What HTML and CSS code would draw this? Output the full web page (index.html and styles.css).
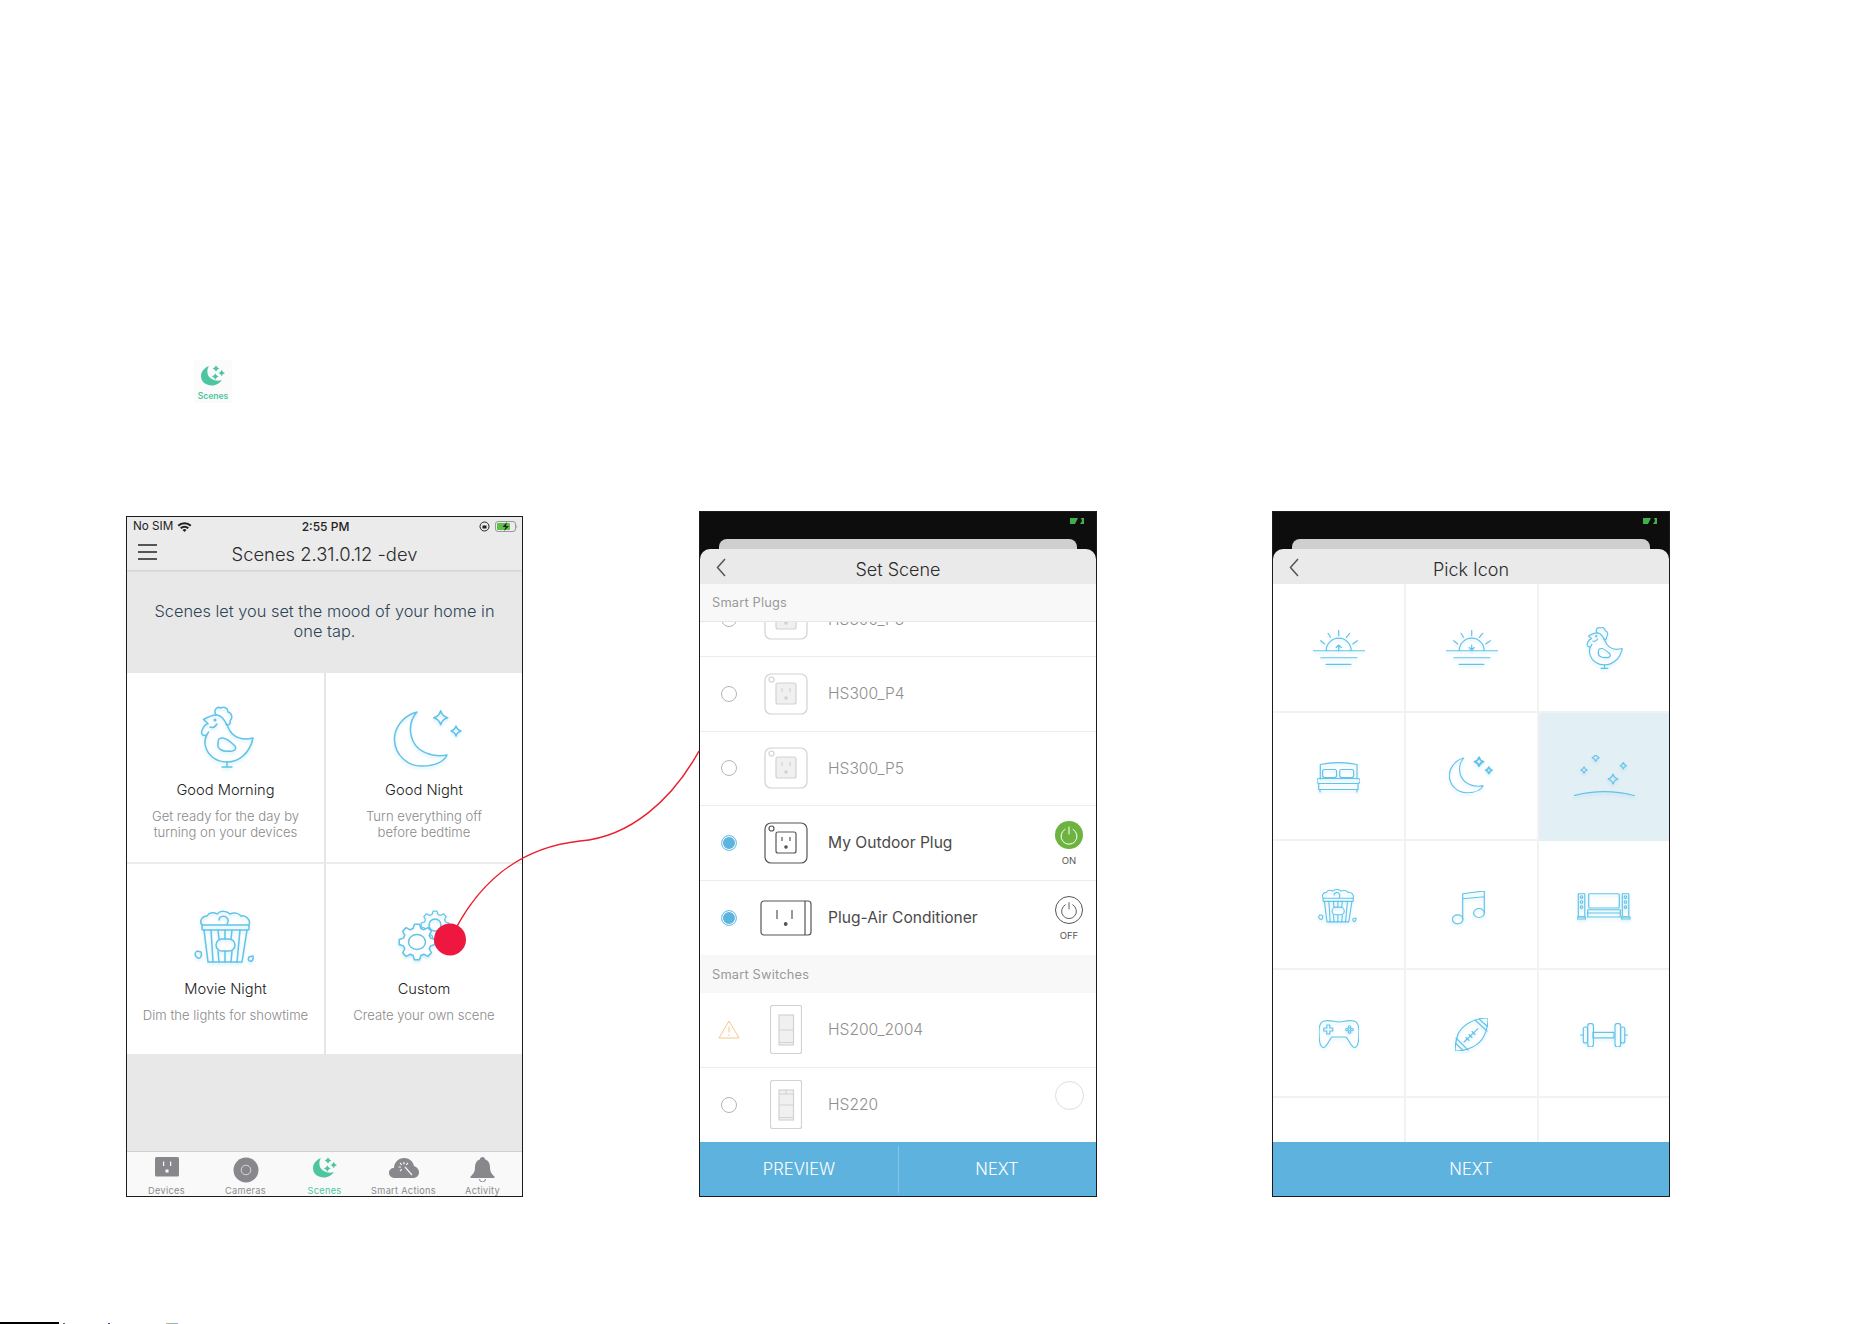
FILE: index.html
```html
<!DOCTYPE html>
<html lang="en">

<head>
    <meta charset="UTF-8">
    <meta name="viewport" content="width=device-width, initial-scale=1.0">
    <title>Scenes</title>
    <link rel="stylesheet" href="styles.css">
</head>

<body>
    <!-- shared drawings -->
    <svg class="defs" aria-hidden="true">
        <defs>
            <path id="star" vector-effect="non-scaling-stroke" d="M0 -1Q.22 -.22 1 0Q.22 .22 0 1Q-.22 .22 -1 0Q-.22 -.22 0 -1Z" />
            <path id="gear" d="M13.5 -3.9L17.8 -2.5L17.8 2.5L13.5 3.9L12.2 6.8L14.4 10.8L10.8 14.4L6.8 12.2L3.9 13.5L2.5 17.8L-2.5 17.8L-3.9 13.5L-6.8 12.2L-10.8 14.4L-14.4 10.8L-12.2 6.8L-13.5 3.9L-17.8 2.5L-17.8 -2.5L-13.5 -3.9L-12.2 -6.8L-14.4 -10.8L-10.8 -14.4L-6.8 -12.2L-3.9 -13.5L-2.5 -17.8L2.5 -17.8L3.9 -13.5L6.8 -12.2L10.8 -14.4L14.4 -10.8L12.2 -6.8Z" />
            <g id="chicken">
                <path d="M26 20C22 20 18 22 13.5 24.5L18 28.5C14 30 12 34 11.5 38C13 42 17 41 18.5 37C15 42 14 48 16 53C19 62 28 67 37 67C49 67 60 58 63 43C52 46 44 42 40 36C37 30 35 26 34 25C32 22 29 20 26 20Z" />
                <path d="M26 20C23 15 27 11 31 13C34 11 38 13 38 17C42 18 43 23 40 26C41 29 38 31 36 29" />
                <path d="M29 44C33 41 40 46 45 51C47 54 44 57 39 56C33 57 27 54 28 49C28 47 28 45 29 44Z" />
                <path d="M20 32C22 33 25 32 27 29M37 67V72M32 72H42" />
                <circle cx="25" cy="25" r=".8" />
            </g>
            <g id="moon">
                <path d="M23 3C8 7 0 20 .5 31C1 46 14 58 29 57C40 57 50 53 53 46C44 48 33 46 25 40C15 31 13 14 23 3Z" />
                <use href="#star" transform="translate(46.7 8.7) scale(7)" />
                <use href="#star" transform="translate(62 22) scale(5)" />
            </g>
            <g id="popcorn">
                <path d="M8 15C5 11 8 6 13 6C15 2 20 2 23 4C27 0 33 1 36 4C40 2 45 3 47 6C52 5 57 10 55 15" />
                <path d="M25 10C25 6 31 5 33 8C35 9 34 13 33 14" />
                <rect x="8" y="15" width="47" height="5" rx="1" />
                <path d="M10 20L14 52H48L53 20" />
                <path d="M17 20L19 52M24 20L25 29M24 41L25 52M31 20V29M31 41V52M38 20L37 29M38 41L37 52M46 20L43 52" />
                <rect x="22" y="29" width="19" height="12" rx="6" />
                <path d="M3 41L7 42C8 45 7 49 4 48C1 47 0 43 3 41Z" />
                <path d="M55 47L59 46C60 49 58 52 56 51C54 51 54 48 55 47Z" />
            </g>
            <g id="gears">
                <use href="#gear" transform="translate(41 15) scale(.78)" />
                <circle cx="41" cy="15" r="6" />
                <use href="#gear" fill="#fff" transform="translate(23 32)" />
                <ellipse cx="23" cy="32" rx="8.5" ry="7.5" />
            </g>
            <g id="sun">
                <path d="M0 20.7H52M7.7 27.7H44M13 34.3H38M13.2 20.7A12.5 12.5 0 0 1 38.2 20.7" />
                <path d="M25.7 0V5.7M15 3.3L17.5 7.3M36.7 3.3L33.3 7.3M7.7 10.7L11.7 14M44.3 10.7L39.7 14" />
            </g>
            <g id="bed">
                <path d="M3.3 17V2.5C15 0 28 0 40 2.5V17" />
                <rect x="5.6" y="7.5" width="14" height="8" rx="2" />
                <rect x="22.7" y="7.5" width="14" height="8" rx="2" />
                <rect x="0" y="16.5" width="43" height="5" rx="2" />
                <path d="M1.7 21.5V27.5H41V21.5M3 27.5V30M40 27.5V30" />
            </g>
            <g id="stars">
                <path d="M0 40.7Q30 32.7 60.7 40.7" />
                <use href="#star" transform="translate(21.7 2.7) scale(3.6)" />
                <use href="#star" transform="translate(49.3 10.7) scale(3.2)" />
                <use href="#star" transform="translate(10 15) scale(3.2)" />
                <use href="#star" transform="translate(39 24) scale(5)" />
            </g>
            <g id="music">
                <ellipse cx="5.7" cy="28.3" rx="5.3" ry="4.5" />
                <ellipse cx="27" cy="22" rx="5.4" ry="4.5" />
                <path d="M10.7 28V2.7L32.3 0V22M10.7 7.7L32.3 5.7" />
            </g>
            <g id="tv">
                <rect x="11.7" y=".7" width="30.6" height="14.3" rx="1" />
                <rect x="10.7" y="16.7" width="32.6" height="7.3" />
                <path d="M10.7 20H43.3" />
                <rect x="1.3" y=".7" width="6.5" height="23" />
                <rect x="45.3" y=".7" width="6.5" height="23" />
                <rect x="0" y="24" width="8.5" height="2" />
                <rect x="44.6" y="24" width="8.5" height="2" />
                <circle cx="4.5" cy="4" r="1.3" />
                <circle cx="4.5" cy="9" r="1.3" />
                <circle cx="4.5" cy="14" r="1.3" />
                <circle cx="48.5" cy="4" r="1.3" />
                <circle cx="48.5" cy="9" r="1.3" />
                <circle cx="48.5" cy="14" r="1.3" />
            </g>
            <g id="gamepad">
                <path d="M5 1C12 -.5 15 2 20 2C25 2 28 -.5 35 1C39 2 40 6 40 12C40 20 39 27 36 27.5C32 28 30 19 27 17H13C10 19 8 28 4 27.5C1 27 0 20 0 12C0 6 1 2 5 1Z" />
                <path d="M7.8 5H10.8V8H13.8V11H10.8V14H7.8V11H4.8V8H7.8Z" />
                <circle cx="30.5" cy="7" r="1.3" />
                <circle cx="30.5" cy="12" r="1.3" />
                <circle cx="28" cy="9.5" r="1.3" />
                <circle cx="33" cy="9.5" r="1.3" />
            </g>
            <g id="football">
                <path d="M33 0C20 0 8 6 3 16C1 22 0 28 0 33C12 33 24 28 29 18C32 12 33 6 33 0Z" />
                <path d="M20 2L32 13M24 1L32.5 8.5M1 20L13 32M.5 25L8 32.5M9 24L23 10.7" />
                <path d="M11 19.5L14 22.5M14 16.5L17 19.5M17 13.5L20 16.5" />
            </g>
            <g id="dumbbell">
                <rect x="13" y="9.3" width="21" height="5.5" />
                <rect x="7.7" y=".3" width="5.7" height="23.7" rx="2.8" />
                <rect x="35" y=".3" width="5.7" height="23.7" rx="2.8" />
                <rect x="3.3" y="4" width="4.3" height="16" rx="2" />
                <rect x="40.5" y="4" width="4.3" height="16" rx="2" />
                <path d="M3.3 12H.5M44.8 12H47.5" />
            </g>
            <g id="plug">
                <rect x="1" y="1" width="42" height="40" rx="6" />
                <circle cx="7.5" cy="6.5" r="2.5" />
                <rect class="socket" x="12" y="10" width="20" height="21" rx="2" />
                <path d="M18 15V19M26 15V19" />
                <circle cx="22" cy="25" r="1.2" fill="currentColor" />
            </g>
            <g id="switch">
                <rect x=".5" y=".5" width="31" height="48" rx="2" />
                <rect class="socket" x="9" y="10" width="14.5" height="30" />
                <path d="M9 25H23.5M9 37.5H23.5" />
            </g>
            <g id="power">
                <path d="M10 8.3A8 8 0 1 0 18 8.3M14 6V13" />
            </g>
            <g id="moon-solid">
                <path d="M8 1C3 3 0 7 0 11C0 17 5 20.5 11 20.5C15 20.5 19 18 21 15C15 17 9 14 7 10C6 7 6 4 8 1Z" />
                <use href="#star" transform="translate(15 3.5) scale(3.3)" />
                <use href="#star" transform="translate(20.7 8) scale(3.3)" />
                <use href="#star" transform="translate(14.3 11.5) scale(3.3)" />
            </g>
            <g id="charge">
                <path d="M0 0H8L5 6H0Z" />
                <path d="M11 0H14V6H10L12 3Z" />
            </g>
        </defs>
    </svg>

    <div class="page">
        <div class="badge">
            <svg class="badge__icon" viewBox="0 0 24 21"><use href="#moon-solid" /></svg>
            <span class="badge__label">Scenes</span>
        </div>

        <div class="phones">
            <!-- scenes list -->
            <section class="phone phone--scenes">
                <header class="top">
                    <div class="status">
                        <span class="status__left">No SIM
                            <svg class="wifi" viewBox="0 0 15 11">
                                <path d="M.5 4A10 10 0 0 1 14.5 4L13 5.5A8 8 0 0 0 2 5.5Z" />
                                <path d="M3 6.5A6.5 6.5 0 0 1 12 6.5L10.5 8A4.5 4.5 0 0 0 4.5 8Z" />
                                <path d="M5.5 9A3 3 0 0 1 9.5 9L7.5 11Z" />
                            </svg>
                        </span>
                        <span class="status__time">2:55 PM</span>
                        <span class="status__right">
                            <svg class="lock" viewBox="0 0 11 11">
                                <circle cx="5.5" cy="5.5" r="4.5" />
                                <rect x="3.5" y="4.5" width="4" height="3" />
                            </svg>
                            <svg class="battery" viewBox="0 0 23 11">
                                <rect class="battery__case" x=".5" y=".5" width="20" height="10" rx="2.5" />
                                <rect class="battery__level" x="2" y="2" width="13" height="7" rx="1" />
                                <path class="battery__bolt" d="M12 1L7.5 6H10.5L9 10L14 5H11Z" />
                                <path class="battery__cap" d="M21.5 4V7C22.5 6.5 22.5 4.5 21.5 4Z" />
                            </svg>
                        </span>
                    </div>
                    <div class="bar">
                        <span class="burger"><i></i><i></i><i></i></span>
                        <h1 class="bar__title">Scenes 2.31.0.12 -dev</h1>
                    </div>
                </header>
                <p class="intro">Scenes let you set the mood of your home in one tap.</p>
                <div class="scenes">
                    <div class="scene">
                        <svg class="line-icon scene__icon" width="80" height="68" viewBox="-4 9 80 68"><use href="#chicken" /></svg>
                        <h2 class="scene__name">Good Morning</h2>
                        <p class="scene__text">Get ready for the day by turning on your devices</p>
                    </div>
                    <div class="scene">
                        <svg class="line-icon scene__icon" width="80" height="68" viewBox="-10 -5 80 68"><use href="#moon" /></svg>
                        <h2 class="scene__name">Good Night</h2>
                        <p class="scene__text">Turn everything off before bedtime</p>
                    </div>
                    <div class="scene scene--low">
                        <svg class="line-icon scene__icon" width="64" height="68" viewBox="0 -7 64 68"><use href="#popcorn" /></svg>
                        <h2 class="scene__name">Movie Night</h2>
                        <p class="scene__text">Dim the lights for showtime</p>
                    </div>
                    <div class="scene scene--low">
                        <svg class="line-icon scene__icon" width="60" height="68" viewBox="0 -7 60 68"><use href="#gears" /></svg>
                        <h2 class="scene__name">Custom</h2>
                        <p class="scene__text">Create your own scene</p>
                    </div>
                </div>
                <div class="filler"></div>
                <nav class="tabs">
                    <div class="tab">
                        <svg class="tab__icon" width="24" height="20" viewBox="0 0 24 20">
                            <rect width="24" height="19.5" rx="1.5" />
                            <path class="tab__cut" d="M8 4.5H9.2V9H8ZM15 4.5H16.2V9H15ZM10.5 12.5H13.5V15.5H10.5Z" />
                        </svg>
                        <span>Devices</span>
                    </div>
                    <div class="tab">
                        <svg class="tab__icon" width="26" height="26" viewBox="0 0 26 26">
                            <circle cx="13" cy="13" r="12.5" />
                            <circle class="tab__ring" cx="13" cy="13" r="4.8" />
                        </svg>
                        <span>Cameras</span>
                    </div>
                    <div class="tab tab--on">
                        <svg class="tab__icon" width="24" height="21" viewBox="0 0 24 21"><use href="#moon-solid" /></svg>
                        <span>Scenes</span>
                    </div>
                    <div class="tab">
                        <svg class="tab__icon" width="30" height="22" viewBox="0 0 30 22">
                            <path d="M6 21C2 21 0 18.5 0 16C0 13 2 11 5 11C5 5 10 1 15 1C20 1 24 4 25 9C28 10 30 12.5 30 15.5C30 18.5 27.5 21 24 21Z" />
                            <path class="tab__wand" d="M16 10L23 18M15 5V7.5M9.5 10H12M11 6L12.8 7.8M19 6L17.2 7.8M11 14L12.8 12.2" />
                        </svg>
                        <span>Smart Actions</span>
                    </div>
                    <div class="tab">
                        <svg class="tab__icon" width="25" height="25" viewBox="0 0 25 25">
                            <path d="M12.5 0C14 0 15 1 15 2.2C18.5 3.5 20 6.5 20 10C20 14 21 16.5 24.5 19.5V21H.5V19.5C4 16.5 5 14 5 10C5 6.5 6.5 3.5 10 2.2C10 1 11 0 12.5 0Z" />
                            <path class="tab__clapper" d="M9.5 22A3 3 0 0 0 15.5 22" />
                        </svg>
                        <span>Activity</span>
                    </div>
                </nav>
            </section>

            <!-- device picker -->
            <section class="phone">
                <div class="modal-top">
                    <div class="dark">
                        <svg class="charge" viewBox="0 0 14 6"><use href="#charge" /></svg>
                        <div class="behind"></div>
                    </div>
                    <div class="modal-bar">
                        <svg class="back" viewBox="0 0 10 19"><path d="M9 1L1.5 9.5L9 18" /></svg>
                        <h1 class="bar__title bar__title--modal">Set Scene</h1>
                    </div>
                </div>
                <h2 class="group group--first">Smart Plugs</h2>
                <div class="list">
                    <div class="row row--cut row--off">
                        <span class="mark"><i class="radio"></i></span>
                        <span class="device"><svg class="device-icon" width="44" height="42" viewBox="0 0 44 42"><use href="#plug" /></svg></span>
                        <span class="row__name">HS300_P3</span>
                    </div>
                    <div class="row row--off">
                        <span class="mark"><i class="radio"></i></span>
                        <span class="device"><svg class="device-icon" width="44" height="42" viewBox="0 0 44 42"><use href="#plug" /></svg></span>
                        <span class="row__name">HS300_P4</span>
                    </div>
                    <div class="row row--off">
                        <span class="mark"><i class="radio"></i></span>
                        <span class="device"><svg class="device-icon" width="44" height="42" viewBox="0 0 44 42"><use href="#plug" /></svg></span>
                        <span class="row__name">HS300_P5</span>
                    </div>
                    <div class="row">
                        <span class="mark"><i class="radio radio--on"></i></span>
                        <span class="device"><svg class="device-icon" width="44" height="42" viewBox="0 0 44 42"><use href="#plug" /></svg></span>
                        <span class="row__name">My Outdoor Plug</span>
                        <span class="toggle">
                            <svg class="power power--on" width="28" height="28" viewBox="0 0 28 28"><use href="#power" /></svg>
                            <span class="toggle__label">ON</span>
                        </span>
                    </div>
                    <div class="row row--flat">
                        <span class="mark"><i class="radio radio--on"></i></span>
                        <span class="device">
                            <svg class="device-icon" width="52" height="36" viewBox="0 0 52 36">
                                <rect x="1" y="1" width="50" height="34" rx="3" />
                                <path d="M45 1V35M17 10V19M32 10V19" />
                                <circle cx="25.7" cy="24" r="1.3" fill="currentColor" />
                            </svg>
                        </span>
                        <span class="row__name">Plug-Air Conditioner</span>
                        <span class="toggle">
                            <svg class="power" width="28" height="28" viewBox="0 0 28 28"><use href="#power" /></svg>
                            <span class="toggle__label">OFF</span>
                        </span>
                    </div>
                    <h2 class="group">Smart Switches</h2>
                    <div class="row row--off">
                        <span class="mark">
                            <svg class="warn" width="22" height="19" viewBox="0 0 22 19">
                                <path d="M11 1L21 18H1Z" />
                                <path d="M11 6.5V12.5M11 14.5V16" />
                            </svg>
                        </span>
                        <span class="device"><svg class="device-icon" width="32" height="49" viewBox="0 0 32 49"><use href="#switch" /></svg></span>
                        <span class="row__name">HS200_2004</span>
                    </div>
                    <div class="row row--off row--flat">
                        <span class="mark"><i class="radio"></i></span>
                        <span class="device">
                            <svg class="device-icon" width="32" height="49" viewBox="0 0 32 49">
                                <use href="#switch" />
                                <path d="M9 14H23.5M16 10V14" />
                            </svg>
                        </span>
                        <span class="row__name">HS220</span>
                        <span class="toggle"><i class="toggle__empty"></i></span>
                    </div>
                </div>
                <footer class="actions">
                    <span class="actions__item">PREVIEW</span>
                    <span class="actions__item actions__item--split">NEXT</span>
                </footer>
            </section>

            <!-- icon picker -->
            <section class="phone">
                <div class="modal-top">
                    <div class="dark">
                        <svg class="charge" viewBox="0 0 14 6"><use href="#charge" /></svg>
                        <div class="behind"></div>
                    </div>
                    <div class="modal-bar">
                        <svg class="back" viewBox="0 0 10 19"><path d="M9 1L1.5 9.5L9 18" /></svg>
                        <h1 class="bar__title bar__title--modal">Pick Icon</h1>
                    </div>
                </div>
                <div class="picker">
                    <div class="pick">
                        <svg class="line-icon line-icon--thin" width="52" height="35" viewBox="0 0 52 35">
                            <use href="#sun" />
                            <path d="M25.7 20.7V15M23.2 17.5L25.7 15L28.2 17.5" />
                        </svg>
                    </div>
                    <div class="pick">
                        <svg class="line-icon line-icon--thin" width="52" height="35" viewBox="0 0 52 35">
                            <use href="#sun" />
                            <path d="M25.7 15V20M23.2 17.5L25.7 20L28.2 17.5" />
                        </svg>
                    </div>
                    <div class="pick"><svg class="line-icon line-icon--small" width="37" height="43" viewBox="10 10 54 63"><use href="#chicken" /></svg></div>
                    <div class="pick pick--low"><svg class="line-icon line-icon--thin" width="43" height="31" viewBox="0 0 43 31"><use href="#bed" /></svg></div>
                    <div class="pick"><svg class="line-icon line-icon--small" width="45" height="40" viewBox="0 0 70 62"><use href="#moon" /></svg></div>
                    <div class="pick pick--on"><svg class="line-icon line-icon--thin" width="61" height="41" viewBox="0 0 61 41"><use href="#stars" /></svg></div>
                    <div class="pick pick--low"><svg class="line-icon line-icon--small" width="41" height="37" viewBox="0 0 64 56"><use href="#popcorn" /></svg></div>
                    <div class="pick pick--low pick--music"><svg class="line-icon line-icon--thin" width="33" height="34" viewBox="0 0 33 34"><use href="#music" /></svg></div>
                    <div class="pick pick--low"><svg class="line-icon line-icon--thin" width="54" height="27" viewBox="0 0 54 27"><use href="#tv" /></svg></div>
                    <div class="pick pick--low"><svg class="line-icon line-icon--thin" width="40" height="29" viewBox="0 0 40 29"><use href="#gamepad" /></svg></div>
                    <div class="pick pick--low"><svg class="line-icon line-icon--thin" width="33" height="33" viewBox="0 0 33 33"><use href="#football" /></svg></div>
                    <div class="pick pick--low"><svg class="line-icon line-icon--thin" width="48" height="24" viewBox="0 0 48 24"><use href="#dumbbell" /></svg></div>
                    <div class="pick"></div>
                    <div class="pick"></div>
                    <div class="pick"></div>
                </div>
                <footer class="actions">
                    <span class="actions__item">NEXT</span>
                </footer>
            </section>
        </div>

        <div class="edge"><i></i><b class="edge__a"></b><b class="edge__b"></b><b class="edge__c"></b></div>

        <!-- callout from Custom to the next screen -->
        <svg class="callout" viewBox="0 0 1872 1324">
            <path d="M450 940C476 885 516 848 580 841C630 837 672 800 699 751" />
            <circle cx="450" cy="939.5" r="16" />
        </svg>
    </div>
</body>

</html>
```

FILE: styles.css
```css
* {
    box-sizing: border-box;
}

body {
    margin: 0;
    background: #fff;
    font-family: Inter, "Liberation Sans", Arial, sans-serif;
    font-weight: 300;
}

h1,
h2,
p {
    margin: 0;
    font-weight: 300;
}

i {
    font-style: normal;
}

.defs {
    position: absolute;
    width: 0;
    height: 0;
}

.page {
    position: relative;
    display: flex;
    flex-direction: column;
    width: 1872px;
    height: 1324px;
    overflow: hidden;
    padding-top: 360px;
}

/* small tab crop at the top */
.badge {
    display: flex;
    flex-direction: column;
    align-items: center;
    width: 38px;
    height: 43px;
    margin-left: 194px;
    padding-top: 5px;
    background: #fbfbfb;
}

.badge__icon {
    width: 24px;
    height: 21px;
    fill: #4dc5a1;
}

.badge__label {
    margin-top: 5px;
    font-size: 8.5px;
    font-weight: 600;
    line-height: 11px;
    color: #4dc5a1;
}

.phones {
    display: flex;
    align-items: flex-start;
    margin-top: 108px;
    padding-left: 126px;
}

.phone {
    display: flex;
    flex-direction: column;
    width: 398px;
    height: 686px;
    margin-right: 175px;
    border: 1px solid #1c1c1c;
    background: #fff;
    overflow: hidden;
}

.phone--scenes {
    width: 397px;
    height: 681px;
    margin-top: 5px;
    margin-right: 176px;
}

/* scenes screen */
.top {
    position: relative;
    z-index: 1;
    height: 53px;
    background: #ebebeb;
    box-shadow: 0 1px 2px rgba(0, 0, 0, .12);
}

.status {
    display: grid;
    grid-template-columns: 1fr auto 1fr;
    align-items: center;
    height: 18px;
    padding: 0 4px 0 6px;
    font-size: 11.7px;
    font-weight: 400;
    color: #222;
}

.status__left {
    display: flex;
    align-items: center;
    gap: 4px;
}

.status__time {
    font-size: 12px;
    font-weight: 500;
}

.status__right {
    display: flex;
    align-items: center;
    justify-content: flex-end;
    gap: 5px;
}

.wifi {
    width: 15px;
    height: 11px;
    fill: #222;
}

.lock {
    width: 11px;
    height: 11px;
    fill: none;
    stroke: #222;
}

.lock rect {
    fill: #222;
    stroke: none;
}

.battery {
    width: 23px;
    height: 11px;
}

.battery__case {
    fill: none;
    stroke: #999;
}

.battery__level {
    fill: #5cc04a;
}

.battery__bolt {
    fill: #222;
}

.battery__cap {
    fill: #999;
}

.bar {
    position: relative;
    display: flex;
    justify-content: center;
    align-items: center;
    height: 35px;
    padding-top: 2px;
}

.burger {
    position: absolute;
    left: 11px;
    top: 9px;
    display: flex;
    flex-direction: column;
    gap: 5.5px;
    width: 19px;
}

.burger i {
    display: block;
    height: 1.5px;
    background: #555;
}

.bar__title {
    font-size: 18.4px;
    color: #2b2b2b;
}

.bar__title--modal {
    padding-top: 6px;
    font-size: 18px;
}

.intro {
    height: 103px;
    padding: 31px 20px 0;
    background: #e9e8e8;
    text-align: center;
    font-size: 16.35px;
    line-height: 20px;
    color: #2c4456;
}

.scenes {
    display: grid;
    grid-template-columns: 197px 1fr;
    grid-auto-rows: 190.5px;
}

.scene {
    display: flex;
    flex-direction: column;
    align-items: center;
    padding: 31px 6px 0;
    text-align: center;
    border-bottom: 2px solid #ececec;
}

.scene:nth-child(even) {
    border-left: 2px solid #e6e6e6;
}

.scene--low {
    padding-top: 39px;
    border-bottom: 0;
}

.scene__icon {
    flex: none;
}

.scene__name {
    margin-top: 8px;
    font-size: 14.7px;
    line-height: 20px;
    color: #222;
}

.scene__text {
    width: 155px;
    margin-top: 9px;
    font-size: 13.1px;
    line-height: 15.5px;
    color: #8a8a8a;
}

.scene--low .scene__text {
    width: auto;
    white-space: nowrap;
}

.filler {
    flex: 1;
    background: #e9e8e8;
}

.tabs {
    display: grid;
    grid-template-columns: repeat(5, 1fr);
    height: 45px;
    border-top: 1px solid #cfcfcf;
    background: #f9f9f9;
}

.tab {
    position: relative;
    display: flex;
    justify-content: center;
    padding-top: 5px;
    font-size: 9.2px;
    font-weight: 400;
    letter-spacing: .3px;
    color: #8b8b8b;
}

.tab span {
    position: absolute;
    bottom: 0;
    line-height: 11px;
    white-space: nowrap;
}

.tab__icon {
    fill: #88888c;
}

.tab__cut {
    fill: #f9f9f9;
}

.tab__ring {
    fill: none;
    stroke: #d8d8d8;
}

.tab__wand {
    fill: none;
    stroke: #f4f4f4;
    stroke-width: 1.2;
}

.tab__clapper {
    fill: none;
    stroke: #88888c;
}

.tab--on {
    color: #4dc5a1;
}

.tab--on .tab__icon {
    fill: #4dc5a1;
}

/* line icons */
.line-icon {
    fill: none;
    stroke: #62c3e8;
    stroke-width: 1.5;
    stroke-linejoin: round;
    stroke-linecap: round;
    filter: drop-shadow(0 2px 1.5px rgba(98, 195, 232, .3));
}

.line-icon--thin {
    stroke-width: 1.15;
}

.line-icon--small {
    stroke-width: 1.7;
}

/* sheets */
.modal-top {
    flex: none;
    background: #0d0d0d;
}

.dark {
    position: relative;
    height: 37px;
}

.charge {
    position: absolute;
    top: 6px;
    right: 12px;
    width: 14px;
    height: 6px;
    fill: #3fb04b;
}

.behind {
    position: absolute;
    left: 19px;
    right: 19px;
    bottom: 0;
    height: 10px;
    border-radius: 8px 8px 0 0;
    background: #cfcfcf;
}

.modal-bar {
    position: relative;
    display: flex;
    justify-content: center;
    align-items: center;
    height: 35px;
    border-radius: 10px 10px 0 0;
    background: #eaeaea;
}

.back {
    position: absolute;
    left: 16px;
    top: 9px;
    width: 10px;
    height: 19px;
    fill: none;
    stroke: #555;
    stroke-width: 1.5;
}

.group {
    flex: none;
    display: flex;
    align-items: center;
    height: 38px;
    padding-left: 12px;
    background: #f8f8f8;
    font-size: 12.8px;
    font-weight: 400;
    letter-spacing: .2px;
    color: #999;
}

.group--first {
    position: relative;
    z-index: 1;
    border-bottom: 1px solid #e6e6e6;
}

.list {
    flex: 1;
    overflow: hidden;
}

.row {
    display: flex;
    align-items: center;
    height: 74.5px;
    border-bottom: 1px solid #ececec;
    color: #555;
}

.row--flat {
    border-bottom: 0;
}

.row--cut {
    margin-top: -39.5px;
}

.row--off {
    --socket: #f0f0f0;
    color: #d2d2d2;
}

.socket {
    fill: var(--socket, none);
}

.mark {
    display: flex;
    justify-content: center;
    align-items: center;
    flex: none;
    width: 58px;
}

.radio {
    display: block;
    width: 16px;
    height: 16px;
    border: 1px solid #b5b5b5;
    border-radius: 50%;
}

.radio--on {
    border-color: #7cc6ea;
    background: #5db4df;
    box-shadow: inset 0 0 0 1px #fff;
}

.warn {
    fill: none;
    stroke: #f6c88c;
    stroke-linejoin: round;
}

.device {
    display: flex;
    justify-content: center;
    align-items: center;
    flex: none;
    width: 56px;
}

.device-icon {
    fill: none;
    stroke: currentColor;
    stroke-width: 1.2;
}

.row__name {
    margin-left: 14px;
    font-size: 15.6px;
    font-weight: 400;
    color: #4a4a4a;
}

.row--off .row__name {
    font-weight: 300;
    color: #8f8f8f;
}

.toggle {
    display: flex;
    flex-direction: column;
    align-items: center;
    gap: 5px;
    width: 30px;
    height: 44px;
    margin-left: auto;
    margin-right: 12px;
}

.power {
    flex: none;
    border: 1px solid #555;
    border-radius: 50%;
    fill: none;
    stroke: #555;
    stroke-linecap: round;
}

.power--on {
    border: 0;
    background: #6cb43f;
    stroke: #fff;
}

.toggle__label {
    font-size: 9.5px;
    font-weight: 400;
    line-height: 14px;
    color: #555;
}

.toggle__empty {
    display: block;
    flex: none;
    width: 29px;
    height: 29px;
    margin-top: -2px;
    border: 1px solid #dedede;
    border-radius: 50%;
}

.actions {
    flex: none;
    display: flex;
    height: 54px;
    background: #5eb2de;
    color: #fff;
    font-size: 16.6px;
}

.actions__item {
    flex: 1;
    display: flex;
    justify-content: center;
    align-items: center;
}

.actions__item--split {
    position: relative;
}

.actions__item--split::before {
    content: "";
    position: absolute;
    left: 0;
    top: 4px;
    bottom: 3px;
    width: 1px;
    background: rgba(255, 255, 255, .25);
}

/* icon grid */
.picker {
    flex: 1;
    display: grid;
    grid-template-columns: 133px 133px 1fr;
    grid-auto-rows: 128.5px;
    overflow: hidden;
}

.pick {
    display: flex;
    justify-content: center;
    align-items: center;
    border-right: 2px solid #f2f2f2;
    border-bottom: 2px solid #f2f2f2;
}

.pick:nth-child(3n) {
    border-right: 0;
}

.pick--low {
    padding-top: 4px;
}

.pick--music {
    padding-top: 7px;
    padding-right: 7px;
}

.pick--on {
    border-bottom-color: #e2eff5;
    background: #e2eff5;
}

/* leftover of the next page at the bottom */
.edge {
    display: flex;
    align-items: flex-end;
    height: 2px;
    margin-top: auto;
}

.edge i {
    width: 59px;
    height: 2px;
    background: #000;
}

.edge b {
    width: 2px;
    height: 1px;
}

.edge__a {
    margin-left: 4px;
    background: #666;
}

.edge__b {
    margin-left: 43px;
    background: #5a3fa8;
}

.edge .edge__c {
    width: 12px;
    margin-left: 56px;
    background: linear-gradient(90deg, #d9a3a3, #8fc08f, #a3a3d9);
}

.callout {
    position: absolute;
    top: 0;
    left: 0;
    width: 1872px;
    height: 1324px;
    pointer-events: none;
}

.callout path {
    fill: none;
    stroke: #e8202f;
    stroke-width: 1.5;
}

.callout circle {
    fill: #ee1740;
}
```
